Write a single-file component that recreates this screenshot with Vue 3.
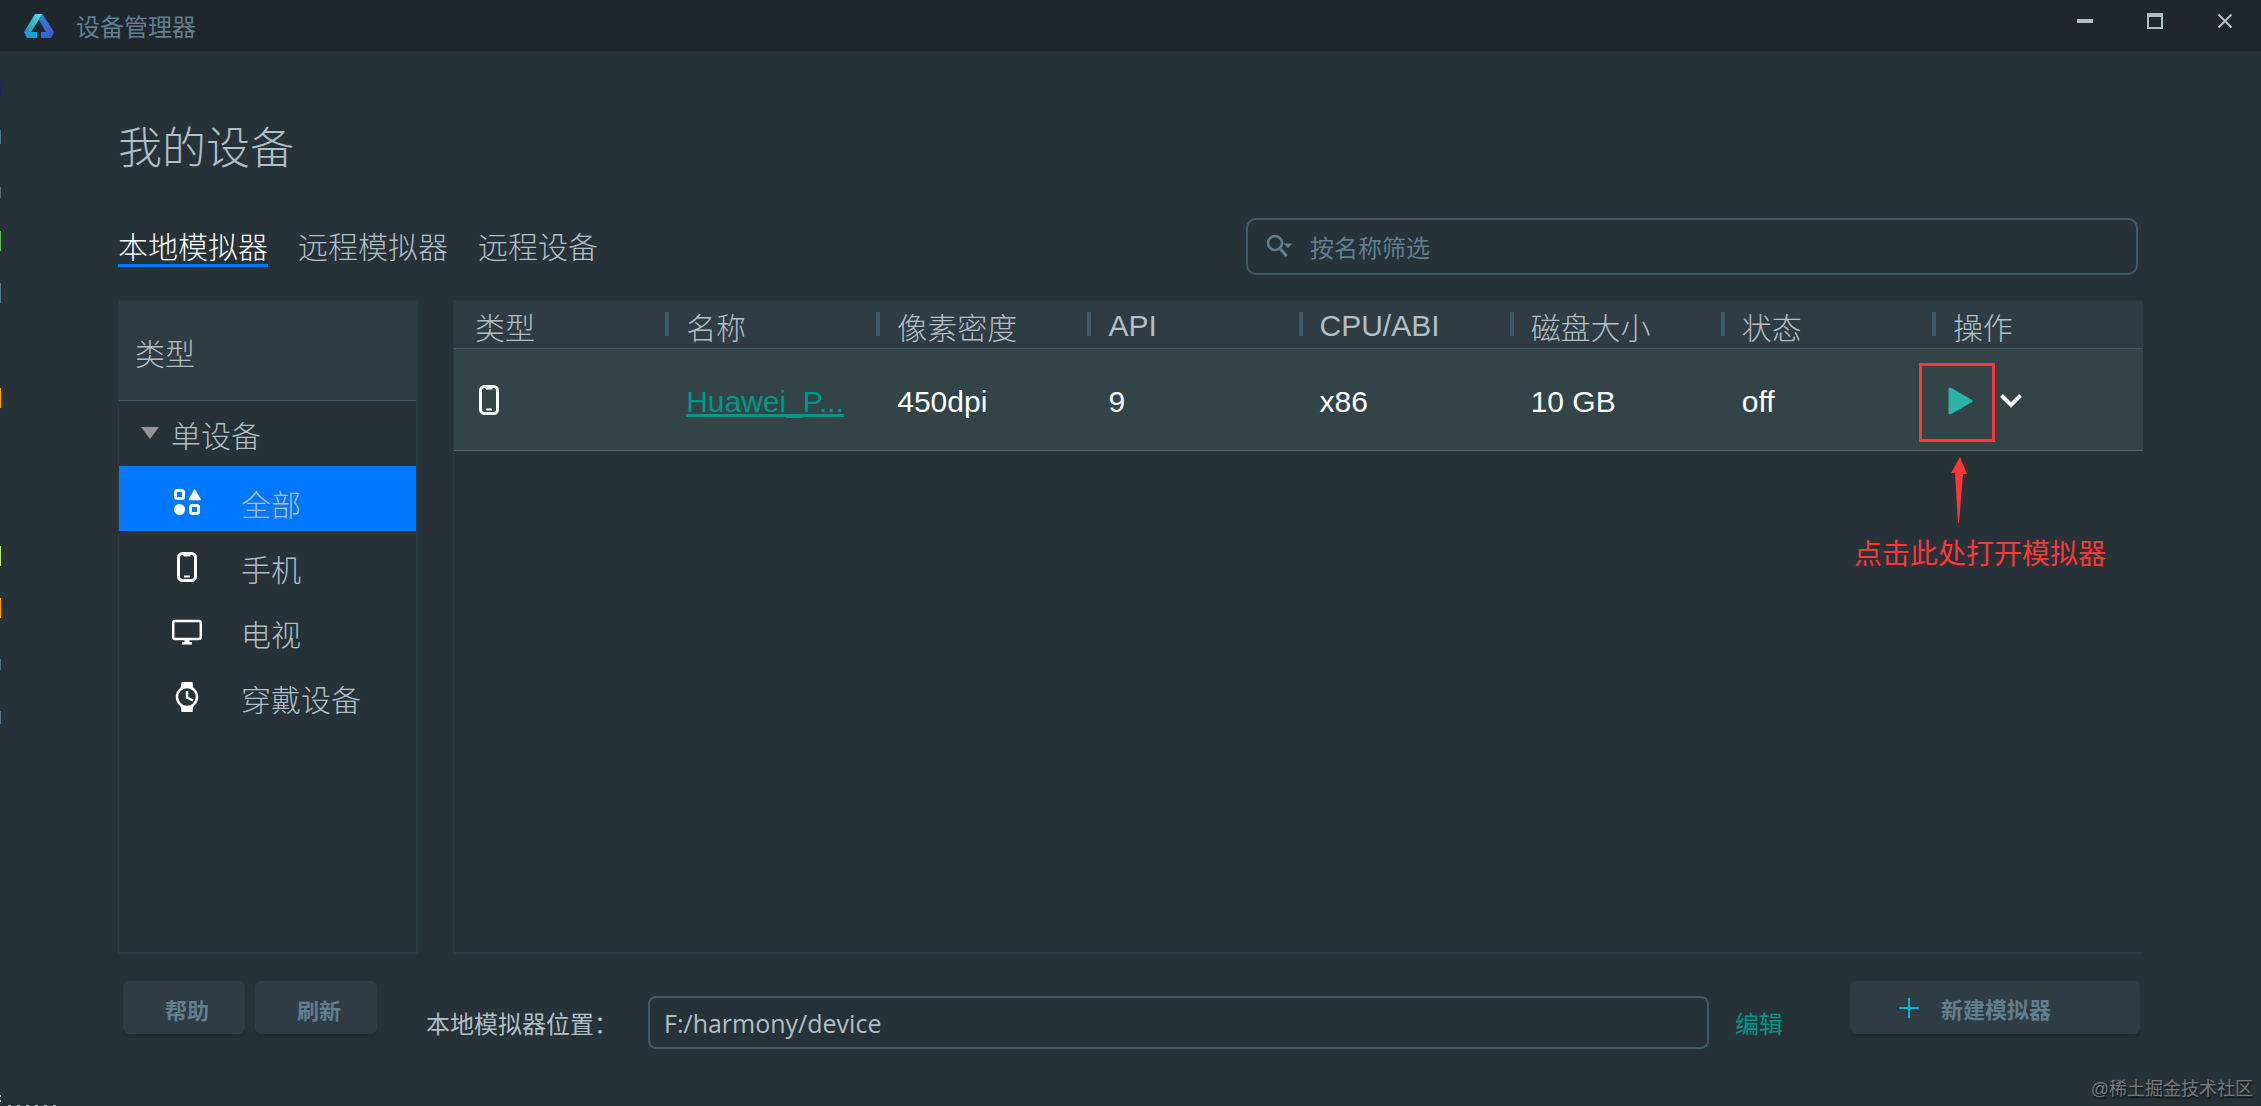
<script setup>
import { ref } from 'vue'

const tabs = ['本地模拟器', '远程模拟器', '远程设备']
const activeTab = ref(0)

const kinds = [
  { id: 'all', label: '全部' },
  { id: 'phone', label: '手机' },
  { id: 'tv', label: '电视' },
  { id: 'wearable', label: '穿戴设备' }
]
const activeKind = ref('all')

const columns = ['类型', '名称', '像素密度', 'API', 'CPU/ABI', '磁盘大小', '状态', '操作']

const devices = [
  { name: 'Huawei_P...', dpi: '450dpi', api: '9', abi: 'x86', disk: '10 GB', status: 'off' }
]

const filterText = ref('')
const location = ref('F:/harmony/device')

// bits of the editor window behind that show past the left edge
const slivers = [
  { top: 81, height: 18, color: '#23285a' },
  { top: 130, height: 14, color: '#56788a' },
  { top: 187, height: 11, color: '#56727c' },
  { top: 231, height: 20, color: '#5fb760' },
  { top: 283, height: 20, color: '#56788a' },
  { top: 388, height: 20, color: '#ffa500' },
  { top: 546, height: 20, color: '#b5e37e' },
  { top: 598, height: 20, color: '#ffa500' },
  { top: 659, height: 11, color: '#56727c' },
  { top: 711, height: 13, color: '#56788a' },
  { top: 1095, height: 2, color: '#b0bec5' },
  { top: 1100, height: 2, color: '#b0bec5' }
]
</script>

<template>
  <div class="window">
    <header class="titlebar">
      <svg class="logo" viewBox="0 0 30 24" width="30" height="24">
        <defs>
          <linearGradient id="logoLeft" x1="0" y1="1" x2="1" y2="0">
            <stop offset="0" stop-color="#168fb0" />
            <stop offset="1" stop-color="#52e3ee" />
          </linearGradient>
          <linearGradient id="logoRight" x1="0" y1="0" x2="1" y2="1">
            <stop offset="0" stop-color="#2b86dc" />
            <stop offset="1" stop-color="#4453c8" />
          </linearGradient>
        </defs>
        <path d="M11 0h7.500L7 18H0z" fill="url(#logoLeft)" />
        <path d="M0 18h13v6H3z" fill="#1f9fd2" />
        <path d="M18.500 0L30 18l-3 6H17v-6h5L15 6z" fill="url(#logoRight)" />
      </svg>
      <span class="app-name">设备管理器</span>
      <div class="window-buttons">
        <button type="button" aria-label="最小化">
          <svg viewBox="0 0 16 16" width="16" height="16"><path d="M0 6h16v4H0z" fill="#b0bec5" /></svg>
        </button>
        <button type="button" aria-label="最大化">
          <svg viewBox="0 0 16 16" width="16" height="16"><path d="M0 0h16v16H0zM2 4v10h12V4z" fill="#b0bec5" fill-rule="evenodd" /></svg>
        </button>
        <button type="button" aria-label="关闭">
          <svg viewBox="0 0 16 16" width="16" height="16"><path d="M1.500 1.500l13 13M14.500 1.500l-13 13" stroke="#b0bec5" stroke-width="2" /></svg>
        </button>
      </div>
    </header>

    <main class="content">
      <h1>我的设备</h1>

      <div class="toolbar">
        <nav class="tabs">
          <button
            v-for="(tab, i) in tabs"
            :key="tab"
            type="button"
            :class="{ active: activeTab === i }"
            @click="activeTab = i"
          >{{ tab }}</button>
        </nav>
        <label class="search">
          <svg viewBox="0 0 28 22" width="28" height="22">
            <circle cx="9" cy="8" r="7" fill="none" stroke="#5f7f8f" stroke-width="2.500" />
            <path d="M13.500 13l7 8" stroke="#5f7f8f" stroke-width="3" />
            <path d="M17.500 8.500h9L22 13z" fill="#5f7f8f" />
          </svg>
          <input v-model="filterText" type="text" placeholder="按名称筛选" aria-label="按名称筛选" />
        </label>
      </div>

      <div class="panels">
        <aside class="sidebar">
          <div class="sidebar-head">类型</div>
          <div class="group">
            <svg viewBox="0 0 18 12" width="18" height="12"><path d="M0 0h18L9 12z" fill="#949494" /></svg>
            <span>单设备</span>
          </div>
          <button
            v-for="kind in kinds"
            :key="kind.id"
            type="button"
            class="kind"
            :class="{ selected: activeKind === kind.id }"
            @click="activeKind = kind.id"
          >
            <svg v-if="kind.id === 'all'" viewBox="0 0 32 32" width="32" height="32">
              <rect x="4.500" y="4.500" width="8" height="8" rx="2" fill="none" stroke="#fff" stroke-width="3" />
              <path d="M23.500 4L29 13.500H18.500z" fill="#fff" stroke="#fff" stroke-width="1.500" stroke-linejoin="round" />
              <circle cx="8.500" cy="23.500" r="5.500" fill="#fff" />
              <rect x="19.500" y="19.500" width="8" height="8" rx="2" fill="none" stroke="#fff" stroke-width="3" />
            </svg>
            <svg v-else-if="kind.id === 'phone'" viewBox="0 0 32 32" width="32" height="32">
              <rect x="7.500" y="2.500" width="17" height="27" rx="4" fill="none" stroke="#fff" stroke-width="3" />
              <path d="M11.500 2.500h9l-1.500 3h-6z" fill="#fff" />
              <path d="M13 25.500h6" stroke="#fff" stroke-width="2" />
            </svg>
            <svg v-else-if="kind.id === 'tv'" viewBox="0 0 32 32" width="32" height="32">
              <rect x="2.200" y="5" width="27.600" height="18" rx="2" fill="none" stroke="#fff" stroke-width="2.500" />
              <path d="M13.500 24h5v2h2.500v2.500H11V26h2.500z" fill="#fff" />
            </svg>
            <svg v-else viewBox="0 0 32 32" width="32" height="32">
              <path d="M9.500 8L10.500 1h11l1 7zM9.500 24l1 7h11l1-7z" fill="#fff" />
              <circle class="dial" cx="16" cy="16" r="10" stroke="#fff" stroke-width="2.500" />
              <path d="M16 10v6.500l6 3" fill="none" stroke="#fff" stroke-width="2.500" />
            </svg>
            <span>{{ kind.label }}</span>
          </button>
        </aside>

        <section class="devices">
          <table>
            <thead>
              <tr>
                <th v-for="column in columns" :key="column" scope="col">
                  <div class="th-inner">{{ column }}</div>
                </th>
              </tr>
            </thead>
            <tbody>
              <tr v-for="device in devices" :key="device.name">
                <td>
                  <svg class="device-icon" viewBox="0 0 28 32" width="28" height="32">
                    <rect x="5.500" y="2.500" width="17" height="27" rx="4" fill="none" stroke="#fff" stroke-width="3" />
                    <path d="M9.500 2.500h9l-1.500 3h-6z" fill="#fff" />
                    <path d="M11 25.500h6" stroke="#fff" stroke-width="2" />
                  </svg>
                </td>
                <td><a href="#">{{ device.name }}</a></td>
                <td>{{ device.dpi }}</td>
                <td>{{ device.api }}</td>
                <td>{{ device.abi }}</td>
                <td>{{ device.disk }}</td>
                <td>{{ device.status }}</td>
                <td class="actions">
                  <div class="action-buttons">
                    <button type="button" aria-label="启动">
                      <svg viewBox="0 0 26 28" width="26" height="28"><path d="M2 2l21 12L2 26z" fill="#2db3aa" stroke="#2db3aa" stroke-width="3" stroke-linejoin="round" /></svg>
                    </button>
                    <button type="button" aria-label="更多">
                      <svg viewBox="0 0 22 14" width="22" height="14"><path d="M1.500 1.500L11 11l9.500-9.500" fill="none" stroke="#fff" stroke-width="4" /></svg>
                    </button>
                  </div>
                  <span class="mark-box"></span>
                  <svg class="mark-arrow" viewBox="0 0 16 66" width="16" height="66">
                    <path d="M9 0l7 17h-4L8 66H7L4 16H0z" fill="#fd3737" />
                  </svg>
                  <span class="mark-text">点击此处打开模拟器</span>
                </td>
              </tr>
            </tbody>
          </table>
        </section>
      </div>

      <footer class="footer">
        <div class="footer-buttons">
          <button type="button" class="btn">帮助</button>
          <button type="button" class="btn">刷新</button>
        </div>
        <div class="location">
          <label for="location">本地模拟器位置：</label>
          <input id="location" v-model="location" type="text" />
          <a href="#">编辑</a>
        </div>
        <button type="button" class="btn btn-new">
          <svg viewBox="0 0 20 20" width="20" height="20"><path d="M10 0v20M0 10h20" stroke="#00b4cc" stroke-width="2" /></svg>
          <span>新建模拟器</span>
        </button>
      </footer>
    </main>

    <span class="watermark">@稀土掘金技术社区</span>
    <i
      v-for="s in slivers"
      :key="s.top"
      class="sliver"
      :style="{ top: s.top + 'px', height: s.height + 'px', background: s.color }"
    ></i>
    <i class="bottom-edge"></i>
  </div>
</template>

<style>
body {
  background: #263238;
}
</style>

<style scoped>
* {
  box-sizing: border-box;
}

.window {
  position: relative;
  display: flex;
  flex-direction: column;
  min-height: 100vh;
  overflow: hidden;
  background: #263238;
  color: #b0bec5;
  font-family: "Liberation Sans", "Noto Sans CJK SC", sans-serif;
  font-size: 30px;
  font-weight: 300;
}

svg {
  display: block;
  flex: none;
}

button {
  padding: 0;
  border: none;
  background: none;
  color: inherit;
  font: inherit;
  cursor: pointer;
}

.titlebar {
  display: flex;
  align-items: center;
  height: 51px;
  padding: 0 28px 0 24px;
  background: #1f272c;
}

.app-name {
  margin-left: 22px;
  color: #5f7f8f;
  font-size: 24px;
  font-weight: 400;
}

.window-buttons {
  display: flex;
  gap: 54px;
  margin-left: auto;
  padding-bottom: 9px;
}

.content {
  display: flex;
  flex: 1;
  flex-direction: column;
  padding: 0 118px 57px;
}

h1 {
  margin: 66px 0 0;
  font-size: 44px;
  font-weight: 300;
  line-height: 64px;
}

.toolbar {
  display: flex;
  justify-content: space-between;
  align-items: center;
  margin-top: 37px;
  padding-right: 5px;
}

.tabs {
  display: flex;
  gap: 30px;
  padding-top: 5px;
}

.tabs button {
  height: 36px;
  line-height: 33px;
  border-bottom: 3px solid transparent;
}

.tabs button.active {
  color: #fff;
  border-color: #0077ff;
}

.search {
  display: flex;
  align-items: center;
  gap: 16px;
  width: 892px;
  max-width: 50%;
  height: 57px;
  padding: 0 18px;
  border: 2px solid #415a66;
  border-radius: 10px;
}

.search svg {
  margin-bottom: 2px;
}

.search input {
  flex: 1;
  min-width: 0;
  padding: 4px 0 0;
  border: none;
  outline: none;
  background: none;
  color: #b0bec5;
  font: inherit;
  font-size: 24px;
  font-weight: 400;
}

.search input::placeholder {
  color: #5f7f8f;
}

.panels {
  display: flex;
  flex: 1;
  gap: 35px;
  margin-top: 25px;
}

.sidebar {
  width: 300px;
  border: 1px solid #2a3a42;
  border-width: 1px 2px 2px 1px;
}

.sidebar-head {
  display: flex;
  align-items: center;
  height: 100px;
  padding: 2px 16px 0;
  border-bottom: 1px solid #415a68;
  background: #2f3c43;
}

.group {
  display: flex;
  align-items: center;
  gap: 12px;
  height: 65px;
}

.group {
  padding: 0 22px;
}

.group svg {
  margin-bottom: 2px;
}

.kind {
  display: flex;
  align-items: center;
  gap: 38px;
  width: 100%;
  height: 65px;
  padding: 6px 52px 0;
  text-align: left;
}

.kind span {
  padding-top: 2px;
}

.kind.selected {
  background: #0077ff;
}

.dial {
  fill: #263238;
}

.devices {
  flex: 1;
  border: 1px solid #2a3a42;
  border-width: 1px 0 2px 1px;
}

table {
  width: 100%;
  border-collapse: separate;
  border-spacing: 0;
  table-layout: fixed;
}

th,
td {
  padding: 0;
  font-weight: 300;
  text-align: left;
}

th {
  height: 48px;
  border-bottom: 1px solid #415a68;
  background: #2f3c43;
}

.th-inner {
  display: flex;
  align-items: center;
  height: 47px;
  padding-top: 2px;
}

.th-inner::before {
  content: '';
  width: 4px;
  height: 24px;
  margin: 0 17px 4px 0;
  background: #415a68;
}

th:first-child .th-inner::before {
  background: none;
}

td {
  height: 102px;
  padding: 4px 0 0 21px;
  border-bottom: 1px solid #666;
  background: #324448;
  color: #fff;
}

td a {
  color: #009688;
}

.device-icon {
  margin-bottom: 4px;
}

.actions {
  position: relative;
  padding-left: 16px;
}

.action-buttons {
  display: flex;
  align-items: center;
  gap: 26px;
  padding-bottom: 2px;
}

.mark-box {
  position: absolute;
  top: 14px;
  left: -13px;
  width: 76px;
  height: 79px;
  border: 3px solid #fd3737;
}

.mark-arrow {
  position: absolute;
  top: 108px;
  left: 19px;
}

.mark-text {
  position: absolute;
  top: 186px;
  left: -78px;
  color: #fd3737;
  font-size: 28px;
  font-weight: 400;
  line-height: 40px;
  white-space: nowrap;
}

.footer {
  display: flex;
  align-items: flex-start;
  margin-top: 27px;
  padding: 0 3px 0 5px;
}

.footer-buttons {
  display: flex;
  gap: 10px;
}

.btn {
  width: 122px;
  height: 53px;
  padding: 2px 0 0 6px;
  border-radius: 6px;
  background: #2f3c43;
  box-shadow: 0 4px 0 #232d32;
  color: #5f7f8f;
  font-size: 22px;
  font-weight: 700;
}

.btn-new {
  display: flex;
  align-items: center;
  gap: 22px;
  width: 290px;
  padding: 0 0 0 49px;
}

.location {
  display: flex;
  flex: 1;
  align-items: center;
  margin: 15px 67px 0 49px;
  font-size: 24px;
  font-weight: 400;
}

.location label {
  width: 222px;
}

.location input {
  flex: 1;
  min-width: 0;
  height: 53px;
  padding: 0 14px;
  border: 2px solid #415a66;
  border-radius: 8px;
  outline: none;
  background: none;
  color: #b0bec5;
  font-family: "Open Sans", sans-serif;
  font-size: 25px;
}

.location a {
  margin-left: 26px;
  color: #009688;
  text-decoration: none;
}

.watermark {
  position: absolute;
  right: 8px;
  bottom: 6px;
  color: #76797c;
  font-size: 18px;
  font-weight: 400;
  text-shadow: 1px 2px 1px #15191c;
}

.sliver {
  position: absolute;
  left: 0;
  width: 1px;
}

.bottom-edge {
  position: absolute;
  bottom: 0;
  left: 8px;
  width: 48px;
  height: 1px;
  background: repeating-linear-gradient(90deg, #b0bec5 0 3px, transparent 3px 9px);
}
</style>
